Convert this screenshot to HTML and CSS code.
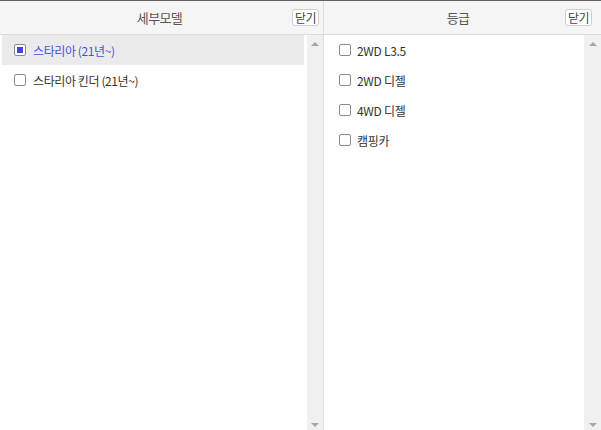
FILE: index.html
```html
<!DOCTYPE html>
<html>
<head>
    <meta charset="utf-8">
    <link rel="stylesheet" href="styles.css">
</head>
<body>
    <div class="picker">
        <div class="panel panel-model">
            <div class="panel-head">
                <span></span>
                <span class="panel-title">세부모델</span>
                <button class="close-btn">닫기</button>
            </div>
            <div class="panel-body">
                <ul class="opt-list">
                    <li class="opt selected"><span class="chk"></span>스타리아 (21년~)</li>
                    <li class="opt"><span class="chk"></span>스타리아 킨더 (21년~)</li>
                </ul>
                <div class="scroll">
                    <span class="arrow up"></span>
                    <span class="arrow down"></span>
                </div>
            </div>
        </div>
        <div class="panel panel-grade">
            <div class="panel-head">
                <span></span>
                <span class="panel-title">등급</span>
                <button class="close-btn">닫기</button>
            </div>
            <div class="panel-body">
                <ul class="opt-list">
                    <li class="opt"><span class="chk"></span>2WD L3.5</li>
                    <li class="opt"><span class="chk"></span>2WD 디젤</li>
                    <li class="opt"><span class="chk"></span>4WD 디젤</li>
                    <li class="opt"><span class="chk"></span>캠핑카</li>
                </ul>
                <div class="scroll">
                    <span class="arrow up"></span>
                    <span class="arrow down"></span>
                </div>
            </div>
        </div>
    </div>
</body>
</html>
```

FILE: styles.css
```css
html, body {
    margin: 0;
    padding: 0;
    background: #fff;
}
body {
    font-family: "Noto Sans CJK KR", "Noto Sans", sans-serif;
    font-size: 12px;
    color: #333;
}
.picker {
    display: flex;
    width: 601px;
    height: 430px;
    border-top: 1px solid #606060;
    box-sizing: border-box;
}
.panel {
    display: flex;
    flex-direction: column;
}
.panel-model {
    width: 324px;
    border-right: 1px solid #dcdcdc;
    box-sizing: border-box;
}
.panel-grade {
    flex: 1;
}
.panel-head {
    display: grid;
    grid-template-columns: 1fr auto 1fr;
    align-items: center;
    height: 33px;
    background: #f5f5f5;
    border-bottom: 1px solid #dcdcdc;
    padding-right: 9px;
}
.panel-model .panel-head {
    padding-right: 4px;
}
.panel-title {
    font-size: 13px;
    color: #555;
    letter-spacing: -0.6px;
}
.close-btn {
    justify-self: end;
    height: 17px;
    padding: 0 2px;
    border: 1px solid #cfcfcf;
    border-radius: 3px;
    background: #fff;
    font-family: inherit;
    font-size: 12px;
    line-height: 14px;
    color: #444;
    letter-spacing: -0.5px;
}
.panel-body {
    flex: 1;
    display: flex;
}
.opt-list {
    flex: 1;
    list-style: none;
    margin: 0;
    padding: 0 3px 0 2px;
}
.panel-grade .opt-list {
    padding-right: 5px;
}
.opt {
    display: flex;
    align-items: center;
    gap: 7px;
    height: 30px;
    padding-left: 12px;
    letter-spacing: -0.3px;
}
.panel-model .opt {
    letter-spacing: -0.4px;
}
.panel-grade .opt {
    padding-left: 13px;
    gap: 6px;
}
.opt.selected {
    background: #ebebeb;
    color: #4a52d4;
}
.chk {
    width: 10px;
    height: 10px;
    border: 1px solid #8c8c8c;
    border-radius: 2px;
    background: #fff;
    display: flex;
    align-items: center;
    justify-content: center;
}
.opt.selected .chk::after {
    content: "";
    width: 6px;
    height: 6px;
    background: #3e47d6;
}
.scroll {
    width: 16px;
    background: #f0f0f0;
    display: flex;
    flex-direction: column;
    justify-content: space-between;
    align-items: center;
    padding: 7px 0 3px;
}
.panel-grade .scroll {
    width: 17px;
}
.arrow {
    width: 0;
    height: 0;
    border-left: 4px solid transparent;
    border-right: 4px solid transparent;
}
.arrow.up {
    border-bottom: 4px solid #a6a6a6;
}
.arrow.down {
    border-top: 4px solid #a6a6a6;
}
```
